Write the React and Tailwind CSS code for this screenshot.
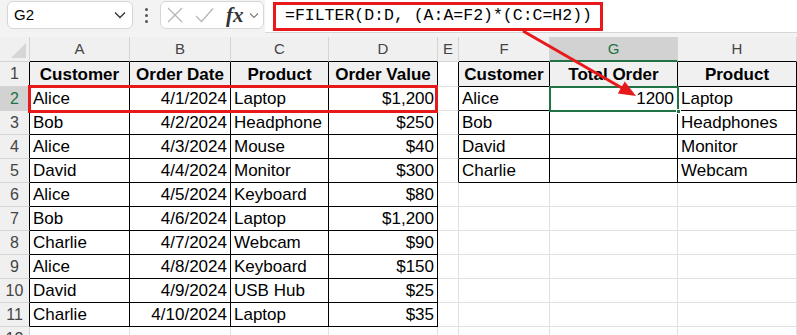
const orders = [
  ['Alice', '4/1/2024', 'Laptop', '$1,200'],
  ['Bob', '4/2/2024', 'Headphone', '$250'],
  ['Alice', '4/3/2024', 'Mouse', '$40'],
  ['David', '4/4/2024', 'Monitor', '$300'],
  ['Alice', '4/5/2024', 'Keyboard', '$80'],
  ['Bob', '4/6/2024', 'Laptop', '$1,200'],
  ['Charlie', '4/7/2024', 'Webcam', '$90'],
  ['Alice', '4/8/2024', 'Keyboard', '$150'],
  ['David', '4/9/2024', 'USB Hub', '$25'],
  ['Charlie', '4/10/2024', 'Laptop', '$35'],
]

const summary = [
  ['Alice', '1200', 'Laptop'],
  ['Bob', '', 'Headphones'],
  ['David', '', 'Monitor'],
  ['Charlie', '', 'Webcam'],
]

const letters = ['', 'A', 'B', 'C', 'D', 'E', 'F', 'G', 'H']
const headers = ['', 'Customer', 'Order Date', 'Product', 'Order Value', '', 'Customer', 'Total Order', 'Product']
const gridCols = 'grid grid-cols-[30px_100px_101px_98px_109px_21px_91px_128px_119px] grid-rows-[100%]'

const inFirst = (r, c) => c >= 1 && c <= 4 && r >= 1 && r <= 11
const inSecond = (r, c) => c >= 6 && c <= 8 && r >= 1 && r <= 5

function cellText(r, c) {
  if (r === 1) return headers[c]
  if (c >= 1 && c <= 4 && r >= 2 && r <= 11) return orders[r - 2][c - 1]
  if (c >= 6 && c <= 8 && r >= 2 && r <= 5) return summary[r - 2][c - 6]
  return ''
}

function ColumnHeaders() {
  return (
    <div className={`${gridCols} h-[25px] font-['Liberation_Sans',Arial,sans-serif] text-[15px] leading-[20px]`}>
      {letters.map((l, c) => {
        if (c === 0) {
          return (
            <div key={c} className="flex items-end justify-end border-r border-b border-r-[#d4d4d4] border-b-[#d4d4d4] bg-[#f0f0f0] pr-[3px] pb-[3px]">
              <svg width="15" height="15" viewBox="0 0 15 15">
                <polygon points="15,0 15,15 0,15" fill="#d6d6d6" />
              </svg>
            </div>
          )
        }
        const selected = c === 7
        const dark = (c >= 1 && c <= 4) || c === 6 || c === 8
        return (
          <div
            key={c}
            className={`flex items-center justify-center border-r border-r-[#d4d4d4] ${
              selected
                ? 'border-b-2 border-b-[#217346] bg-[#d2d2d2] text-[#217346]'
                : dark
                  ? 'border-b border-b-black bg-[#f0f0f0] text-[#444]'
                  : 'border-b border-b-[#d4d4d4] bg-[#f0f0f0] text-[#444]'
            }`}
          >
            {l}
          </div>
        )
      })}
    </div>
  )
}

function SheetRow({ r }) {
  return (
    <div className={`${gridCols} ${r === 1 ? 'h-[25px]' : 'h-6'}`}>
      {letters.map((_, c) => {
        if (c === 0) {
          return (
            <div
              key={c}
              className={`flex items-center justify-center overflow-hidden border-b border-b-[#d4d4d4] text-[16px] leading-[20px] ${
                r <= 11 ? 'border-r border-r-black' : 'border-r border-r-[#d4d4d4]'
              } ${r === 2 ? 'bg-[#d2d2d2] text-[#217346]' : 'bg-[#f0f0f0] text-[#444]'}`}
            >
              {r}
            </div>
          )
        }
        const tableCell = inFirst(r, c) || inSecond(r, c)
        const rightBlack = tableCell || (c === 5 && r <= 5)
        const head = r === 1 && tableCell
        const alignRight = r >= 2 && (c === 2 || c === 4 || c === 7)
        return (
          <div
            key={c}
            className={`flex items-center overflow-hidden whitespace-nowrap border-r border-b text-[17px] leading-[21px] text-black ${
              rightBlack ? 'border-r-black' : 'border-r-[#e1e1e1]'
            } ${tableCell ? 'border-b-black' : 'border-b-[#e1e1e1]'} ${
              head ? 'justify-center bg-[#f0f0f0] font-bold' : alignRight ? 'justify-end bg-white pr-[3px]' : 'justify-start bg-white pl-[3px]'
            }`}
          >
            {cellText(r, c)}
          </div>
        )
      })}
    </div>
  )
}

function Toolbar() {
  return (
    <div className="flex h-[37px] items-start bg-[#f3f3f3] font-['Liberation_Sans',Arial,sans-serif]">
      <div className="ml-[7px] mt-[1px] flex h-[28px] w-[126px] items-center justify-between rounded-[6px] border border-[#d6d6d6] bg-white pl-[6px] pr-[6px]">
        <span className="text-[15px] text-black">G2</span>
        <svg width="12" height="8" viewBox="0 0 12 8">
          <path d="M1 1.5 L6 6.5 L11 1.5" fill="none" stroke="#333" strokeWidth="1.3" />
        </svg>
      </div>
      <div className="flex h-[30px] w-[27px] flex-col items-center justify-center gap-[3px]">
        <span className="h-[3px] w-[3px] rounded-full bg-[#555]" />
        <span className="h-[3px] w-[3px] rounded-full bg-[#555]" />
        <span className="h-[3px] w-[3px] rounded-full bg-[#555]" />
      </div>
      <div className="mt-[1px] flex h-[28px] w-[104px] items-center rounded-[6px] border border-[#d6d6d6] bg-white pl-[6px]">
        <svg width="16" height="16" viewBox="0 0 16 16">
          <path d="M1 1 L15 15 M15 1 L1 15" stroke="#b4b4b4" strokeWidth="1.2" />
        </svg>
        <svg className="ml-[12px]" width="19" height="16" viewBox="0 0 19 16">
          <path d="M1 9 L6.5 14.5 L18 1.5" fill="none" stroke="#b4b4b4" strokeWidth="1.2" />
        </svg>
        <span className="ml-[12px] font-['Liberation_Serif',serif] text-[21px] font-bold italic leading-none text-[#333]">fx</span>
        <svg className="ml-[5px]" width="10" height="7" viewBox="0 0 10 7">
          <path d="M1 1.5 L5 5.5 L9 1.5" fill="none" stroke="#777" strokeWidth="1.1" />
        </svg>
      </div>
      <div className="ml-[1px] flex h-[33px] flex-1 items-center border-b border-[#d6d6d6] bg-white">
        <span className="ml-[8px] flex h-[29px] items-center border-[3px] border-[#e8191b] pl-[9px] pr-[8px] font-['Liberation_Mono',monospace] text-[16.5px] text-black">
          =FILTER(D:D, (A:A=F2)*(C:C=H2))
        </span>
      </div>
    </div>
  )
}

export default function App() {
  const rows = Array.from({ length: 12 }, (_, i) => i + 1)
  return (
    <div className="relative h-[335px] w-[797px] overflow-hidden bg-white font-['Liberation_Sans',Arial,sans-serif]">
      <Toolbar />
      <ColumnHeaders />
      {rows.map((r) => (
        <SheetRow key={r} r={r} />
      ))}

      {/* highlight on row 2 */}
      <div className="pointer-events-none absolute left-[28px] top-[85px] h-[28px] w-[410px] border-[3px] border-[#e8191b]" />

      {/* active cell G2 */}
      <div className="pointer-events-none absolute left-[549px] top-[86px] h-[26px] w-[130px] border-2 border-[#217346]" />
      <div className="pointer-events-none absolute left-[676px] top-[109px] h-[5px] w-[5px] border border-white bg-[#217346]" />

      <svg className="pointer-events-none absolute left-0 top-0" width="797" height="335" viewBox="0 0 797 335">
        <line x1="523" y1="31" x2="622" y2="88" stroke="#e8191b" strokeWidth="3" />
        <polygon points="636,96 617.8,93.6 624.8,81.4" fill="#e8191b" />
      </svg>
    </div>
  )
}
